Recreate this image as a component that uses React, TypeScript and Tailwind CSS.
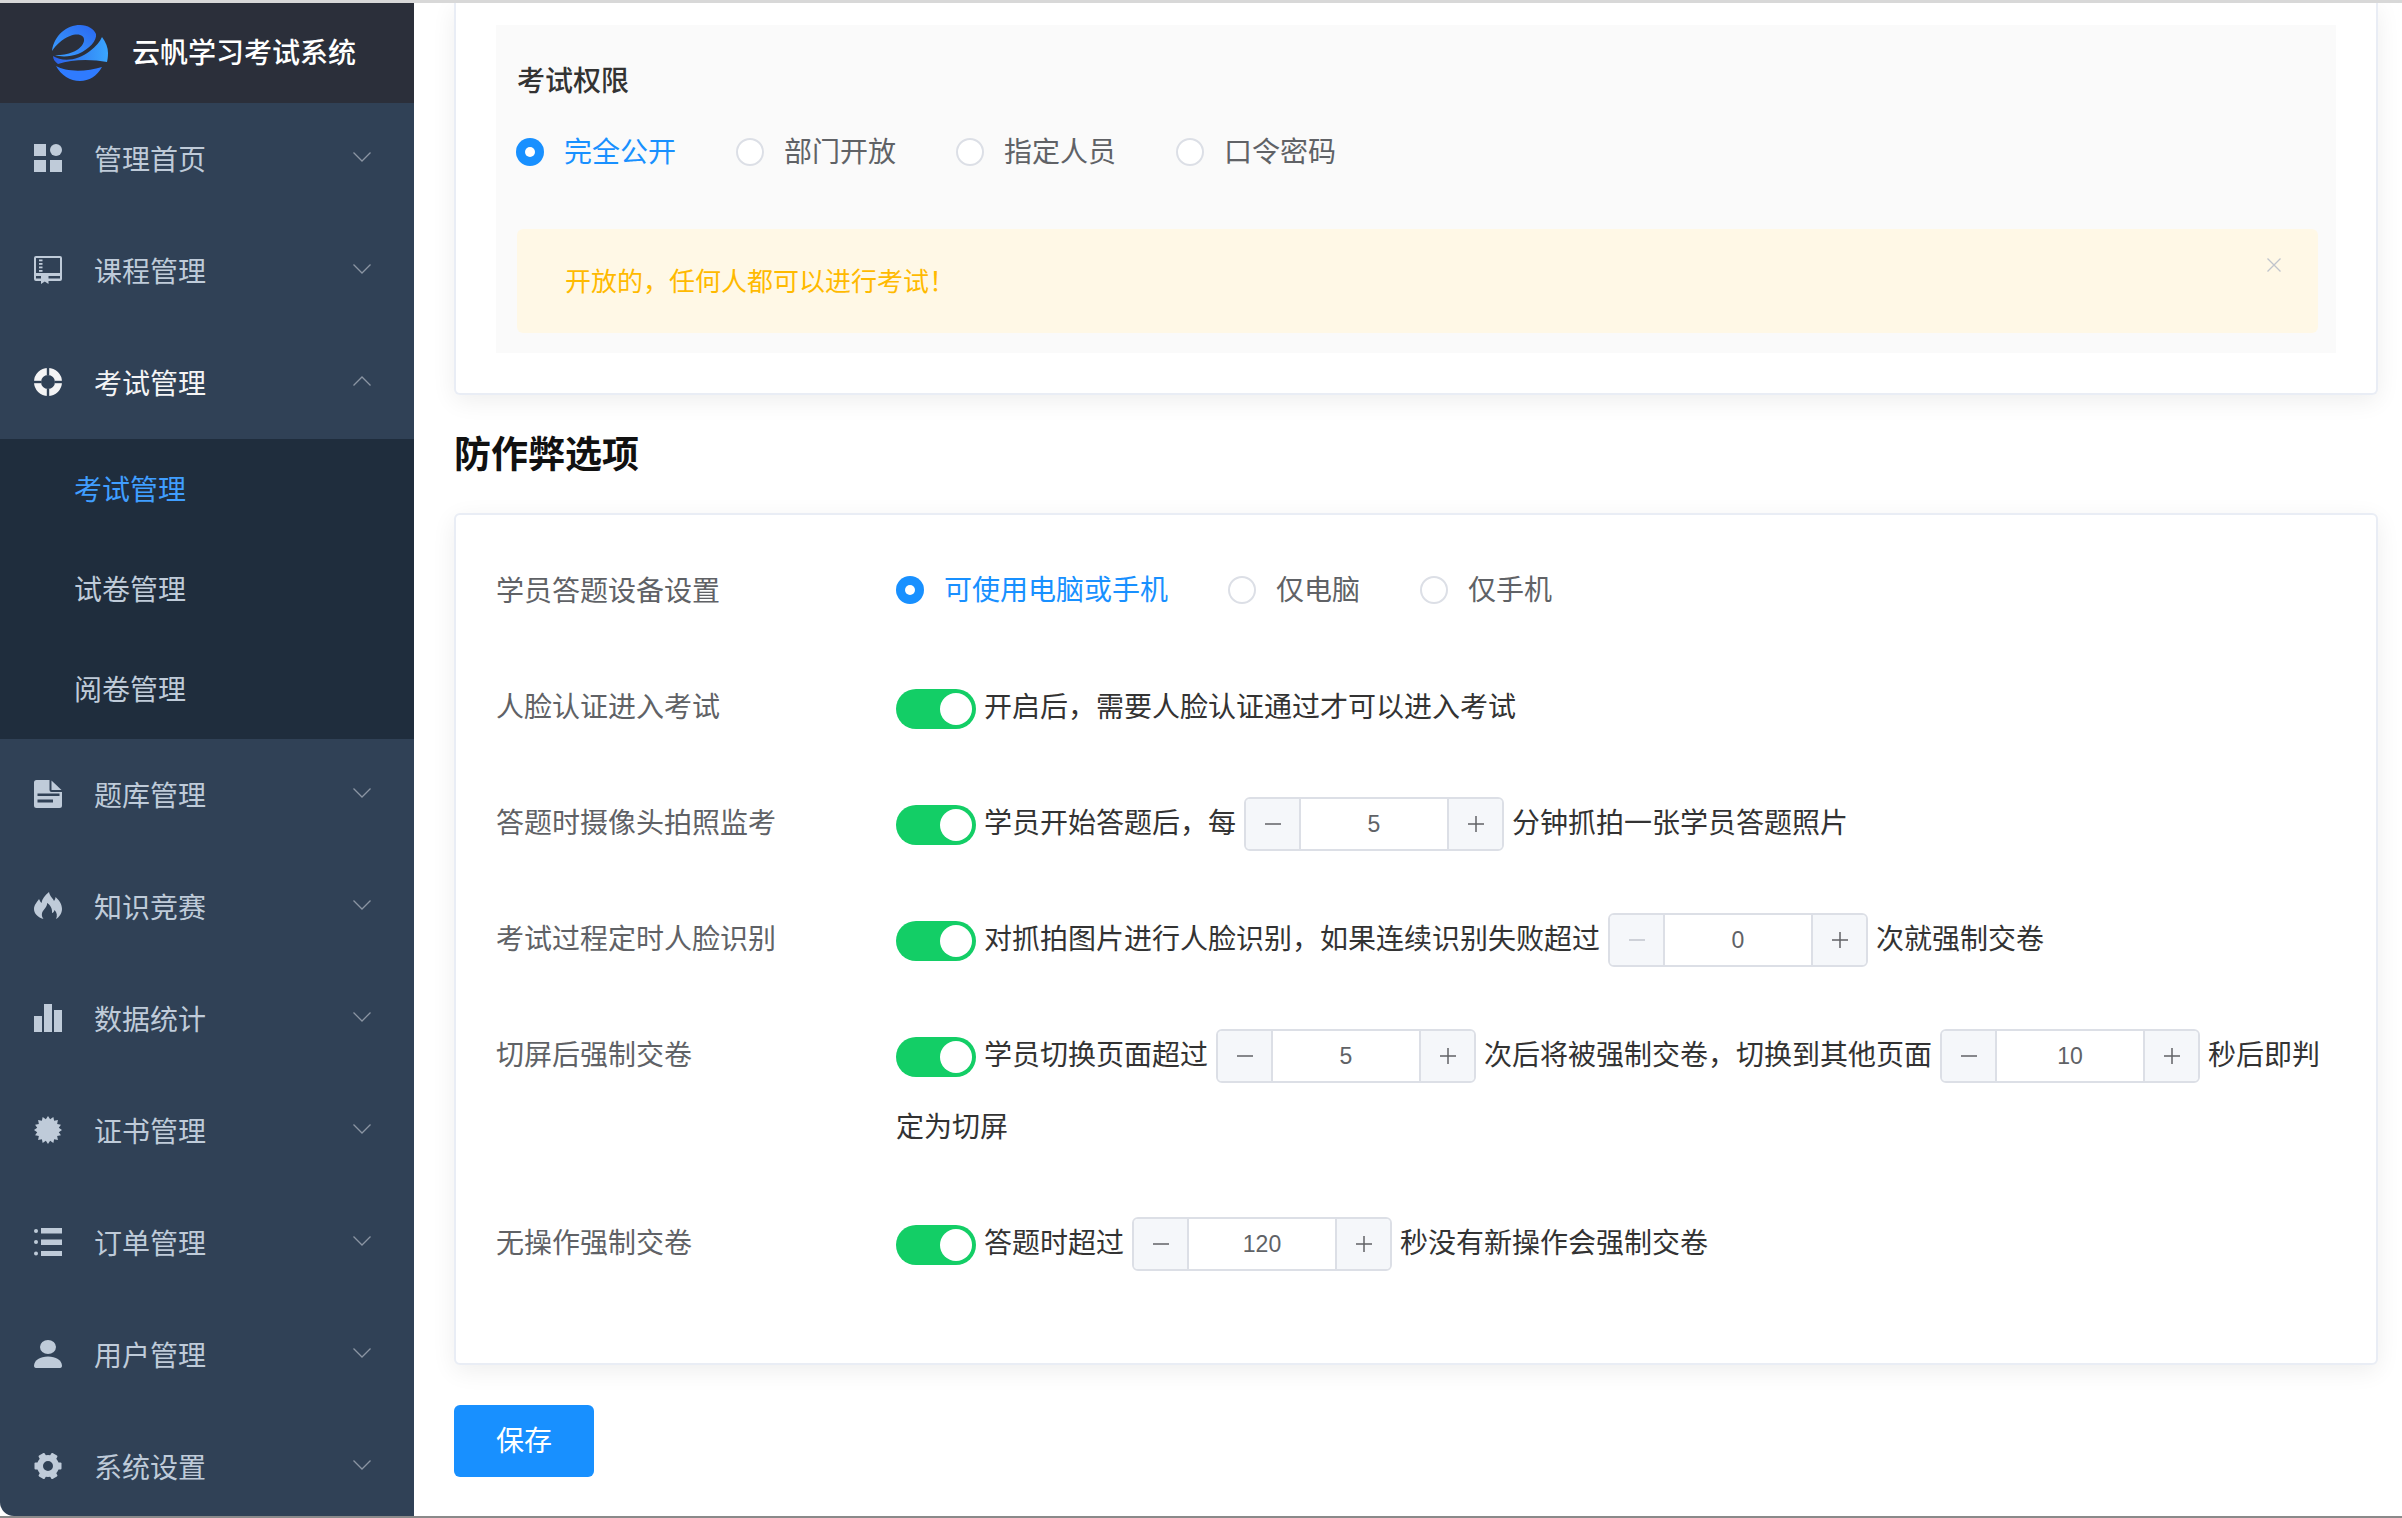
import { ReactNode } from "react";

const Grid = () => (
  <svg viewBox="0 0 28 28" className="w-7 h-7" fill="currentColor">
    <rect x="0" y="0" width="12" height="12" />
    <circle cx="22" cy="6" r="6" />
    <rect x="0" y="16" width="12" height="12" />
    <rect x="16" y="16" width="12" height="12" />
  </svg>
);

const Book = () => (
  <svg viewBox="0 0 28 28" className="w-7 h-7" fill="currentColor">
    <path
      fillRule="evenodd"
      d="M2 0h24a2 2 0 0 1 2 2v21a2 2 0 0 1-2 2H2a2 2 0 0 1-2-2V2a2 2 0 0 1 2-2zM2 2v15h24V2zM2 20v2.500h24V20z"
    />
    <rect x="5" y="3.500" width="3.500" height="1.800" />
    <rect x="5" y="7" width="3.500" height="1.800" />
    <rect x="5" y="10.500" width="3.500" height="1.800" />
    <rect x="5" y="14" width="3.500" height="1.800" />
    <path d="M7 20h7.500v8l-3.750-2.500L7 28z" />
  </svg>
);

const Ring = () => (
  <svg viewBox="0 0 28 28" className="w-7 h-7">
    <circle cx="14" cy="14" r="10.500" fill="none" stroke="currentColor" strokeWidth="7" />
    <rect x="12.800" y="0" width="2.400" height="7" fill="#304156" />
    <rect x="12.800" y="21" width="2.400" height="7" fill="#304156" />
    <rect x="0" y="12.800" width="7" height="2.400" fill="#304156" />
    <rect x="21" y="12.800" width="7" height="2.400" fill="#304156" />
  </svg>
);

const FileIcon = () => (
  <svg viewBox="0 0 28 28" className="w-7 h-7" fill="currentColor">
    <path d="M2.500 0H15.500V10a2 2 0 0 0 2 2H28v13.500a2.500 2.500 0 0 1-2.500 2.500h-23A2.500 2.500 0 0 1 0 25.500v-23A2.500 2.500 0 0 1 2.500 0z" />
    <path d="M17.500 0.500 27.500 10H17.500z" />
    <rect x="3.500" y="13.500" width="22" height="2.500" fill="#304156" />
    <rect x="3.500" y="19.500" width="15.500" height="3" fill="#304156" />
  </svg>
);

const Fire = () => (
  <svg viewBox="0 0 28 28" className="w-7 h-7" fill="currentColor">
    <path d="M15 0C16 5 19 6 20 9C21 7.500 21.500 6.500 21.500 5C25 8 28 12 28 17C28 21 25.500 25 22 27C23.500 24 23 20.500 20.500 18C20 20 19 21 18 21C18.500 17 16.500 13 13 11C13.500 14 11 16 9 19C7 22 8 25 9.500 27C3 25 0 21 0 17C0 13 3 10 5 7C6 9 6.500 10 7.500 11C8 7 11 3 15 0Z" />
  </svg>
);

const Bars = () => (
  <svg viewBox="0 0 28 28" className="w-7 h-7" fill="currentColor">
    <rect x="0" y="12" width="8" height="16" />
    <rect x="10" y="0" width="8" height="28" />
    <rect x="20" y="6" width="8" height="22" />
  </svg>
);

const badgePoints = Array.from({ length: 32 }, (_, i) => {
  const r = i % 2 ? 11 : 14;
  const a = (i * Math.PI) / 16;
  return (14 + r * Math.sin(a)).toFixed(2) + "," + (14 - r * Math.cos(a)).toFixed(2);
}).join(" ");

const Badge = () => (
  <svg viewBox="0 0 28 28" className="w-7 h-7" fill="currentColor">
    <polygon points={badgePoints} />
  </svg>
);

const ListIcon = () => (
  <svg viewBox="0 0 28 28" className="w-7 h-7" fill="currentColor">
    <circle cx="2" cy="3" r="2" />
    <circle cx="2" cy="14" r="2" />
    <circle cx="2" cy="25.500" r="2" />
    <rect x="7" y="0" width="21" height="5.500" />
    <rect x="7" y="11.500" width="21" height="5.500" />
    <rect x="7" y="23" width="21" height="5" />
  </svg>
);

const User = () => (
  <svg viewBox="0 0 28 28" className="w-7 h-7" fill="currentColor">
    <ellipse cx="14" cy="7" rx="8" ry="7" />
    <path d="M2 28C0.500 28 0 27 0 25.500C0.500 20 6 16.500 14 16.500S27.500 20 28 25.500C28 27 27.500 28 26 28Z" />
  </svg>
);

const Cog = () => (
  <svg viewBox="0 0 28 28" className="w-7 h-7" fill="currentColor">
    <circle cx="14" cy="14" r="8" fill="none" stroke="currentColor" strokeWidth="6" />
    {[30, 90, 150, 210, 270, 330].map((deg) => (
      <rect key={deg} x="10.500" y="0.500" width="7" height="6" rx="1" transform={"rotate(" + deg + " 14 14)"} />
    ))}
  </svg>
);

const Logo = () => (
  <svg viewBox="0 0 56 56" className="w-14 h-14">
    <defs>
      <linearGradient id="lg1" x1="0" y1="1" x2="1" y2="0">
        <stop offset="0" stopColor="#3aa0ff" />
        <stop offset="1" stopColor="#2a66f0" />
      </linearGradient>
      <linearGradient id="lg2" x1="0" y1="0" x2="1" y2="0">
        <stop offset="0" stopColor="#2b5fe8" />
        <stop offset="1" stopColor="#3aa6ff" />
      </linearGradient>
    </defs>
    <path
      fill="url(#lg1)"
      d="M0 26C2 10 15 0 28 0C36 0 42 4 44 9C45 15 38 24 26 29C18 32 8 32 3 30C16 31 30 25 32 16C33 10 26 8 18 11C10 14 4 20 0 26Z"
    />
    <path
      fill="url(#lg2)"
      d="M1 31C10 37 26 36 38 26C44 21 48 17 50 12C54 17 56 23 56 28C56 32 55.500 35 55 37C40 34 20 34 6 39C3 37 1 34 1 31Z"
    />
    <path fill="#2f7bff" d="M4 41C14 47 34 47 50 42C45 51 37 56 28 56C18 56 9 50 4 41Z" />
  </svg>
);

const Chevron = ({ up }: { up?: boolean }) => (
  <svg viewBox="0 0 18 10" className="w-[18px] h-[10px] -mt-[4px]" fill="none" stroke="#8b95a3" strokeWidth="1.300">
    {up ? <path d="M0.500 9.500 9 1l8.500 8.500" /> : <path d="M0.500 0.500 9 9l8.500-8.500" />}
  </svg>
);

const MenuRow = ({ icon, label, open }: { icon: ReactNode; label: string; open?: boolean }) => (
  <div className={"flex items-center h-[112px] pl-[34px] pr-[43px] " + (open ? "text-[#f4f4f5]" : "text-[#bfcbd9]")}>
    <span className="-mt-[2px]">{icon}</span>
    <span className="ml-[32px] flex-1 pt-[4px] text-[28px]">{label}</span>
    <Chevron up={open} />
  </div>
);

const SubRow = ({ label, active }: { label: string; active?: boolean }) => (
  <div className={"flex items-center h-[100px] pl-[74px] pt-[4px] text-[28px] " + (active ? "text-[#409eff]" : "text-[#bfcbd9]")}>{label}</div>
);

const Sidebar = () => (
  <aside className="w-[414px] shrink-0 bg-[#304156] rounded-bl-[14px] overflow-hidden">
    <div className="flex items-center h-[100px] bg-[#2b2f3a] pl-[52px]">
      <Logo />
      <span className="ml-[24px] pt-[2px] text-[28px] font-medium text-white">云帆学习考试系统</span>
    </div>
    <MenuRow icon={<Grid />} label="管理首页" />
    <MenuRow icon={<Book />} label="课程管理" />
    <MenuRow icon={<Ring />} label="考试管理" open />
    <div className="bg-[#1f2d3d]">
      <SubRow label="考试管理" active />
      <SubRow label="试卷管理" />
      <SubRow label="阅卷管理" />
    </div>
    <MenuRow icon={<FileIcon />} label="题库管理" />
    <MenuRow icon={<Fire />} label="知识竞赛" />
    <MenuRow icon={<Bars />} label="数据统计" />
    <MenuRow icon={<Badge />} label="证书管理" />
    <MenuRow icon={<ListIcon />} label="订单管理" />
    <MenuRow icon={<User />} label="用户管理" />
    <MenuRow icon={<Cog />} label="系统设置" />
  </aside>
);

const Radio = ({ label, checked }: { label: string; checked?: boolean }) => (
  <label className="flex items-center gap-5">
    {checked ? (
      <span className="flex items-center justify-center w-7 h-7 rounded-full bg-[#1890ff]">
        <span className="w-[10px] h-[10px] rounded-full bg-white" />
      </span>
    ) : (
      <span className="w-7 h-7 rounded-full border-2 border-[#dcdfe6] bg-white" />
    )}
    <span className={"pt-[2px] " + (checked ? "text-[#1890ff]" : "text-[#606266]")}>{label}</span>
  </label>
);

const Toggle = () => (
  <span className="inline-flex items-center justify-end align-middle w-20 h-10 mr-2 mb-[2px] pr-1 rounded-full bg-[#13ce66]">
    <span className="w-8 h-8 rounded-full bg-white" />
  </span>
);

const Stepper = ({ value, disabled }: { value: number; disabled?: boolean }) => (
  <span className="inline-flex align-middle w-[260px] h-[54px] mx-2 mb-[4px] border-2 border-[#dcdfe6] rounded-[6px] overflow-hidden font-['Liberation_Sans',sans-serif] text-[#606266]">
    <span className={"flex items-center justify-center w-[55px] bg-[#f5f7fa] border-r-2 border-[#dcdfe6] " + (disabled ? "text-[#c0c4cc]" : "")}>
      <svg viewBox="0 0 16 16" className="w-4 h-4" fill="none" stroke="currentColor" strokeWidth="1.500">
        <path d="M0 8h16" />
      </svg>
    </span>
    <span className="flex flex-1 items-center justify-center bg-white text-[23px]">{value}</span>
    <span className="flex items-center justify-center w-[55px] bg-[#f5f7fa] border-l-2 border-[#dcdfe6]">
      <svg viewBox="0 0 16 16" className="w-4 h-4" fill="none" stroke="currentColor" strokeWidth="1.500">
        <path d="M0 8h16M8 0v16" />
      </svg>
    </span>
  </span>
);

const FormRow = ({ label, children, last }: { label: string; children: ReactNode; last?: boolean }) => (
  <div className={"flex " + (last ? "" : "mb-[42px]")}>
    <div className="w-[400px] shrink-0 pt-[2px] leading-[72px] text-[#606266]">{label}</div>
    <div className="flex-1 pt-[2px] leading-[72px] text-[#333]">{children}</div>
  </div>
);

export default function App() {
  return (
    <div className="flex flex-col w-[2402px] h-[1518px] overflow-hidden bg-white text-[28px] font-['Liberation_Sans','Noto_Sans_CJK_SC',sans-serif]">
      <div className="h-[3px] shrink-0 bg-[#d8d8d8]" />
      <div className="flex flex-1 min-h-0">
        <Sidebar />
        <main className="flex-1 min-w-0 pl-[40px] pr-[24px] overflow-hidden">
          <section className="h-[392px] pt-[22px] px-[40px] bg-white border-x-2 border-b-2 border-[#e9edf5] rounded-b-[6px] shadow-[0_6px_24px_rgba(0,0,0,0.07)]">
            <div className="h-[328px] pl-[21px] pr-[18px] pt-[37px] bg-[#fafafa]">
              <h3 className="leading-10 font-medium text-[#333]">考试权限</h3>
              <div className="flex gap-[60px] h-10 mt-[30px] -ml-[1px]">
                <Radio label="完全公开" checked />
                <Radio label="部门开放" />
                <Radio label="指定人员" />
                <Radio label="口令密码" />
              </div>
              <div className="relative flex items-center h-[104px] mt-[57px] pl-[48px] pt-[2px] rounded-[6px] bg-[#fff8e6] text-[26px] text-[#ffba00]">
                <span>开放的，任何人都可以进行考试！</span>
                <svg viewBox="0 0 14 14" className="absolute top-[29px] right-[37px] w-[14px] h-[14px]" fill="none" stroke="#c0c4cc" strokeWidth="1.300">
                  <path d="M0.500 0.500l13 13M13.500 0.500l-13 13" />
                </svg>
              </div>
            </div>
          </section>

          <h2 className="mt-[36px] text-[37px] leading-[50px] font-bold text-[#111]">防作弊选项</h2>

          <section className="h-[852px] mt-[32px] pt-[39px] px-[40px] bg-white border-2 border-[#e9edf5] rounded-[6px] shadow-[0_6px_24px_rgba(0,0,0,0.07)]">
            <FormRow label="学员答题设备设置">
              <div className="flex items-center gap-[60px] h-[72px] -mt-[2px]">
                <Radio label="可使用电脑或手机" checked />
                <Radio label="仅电脑" />
                <Radio label="仅手机" />
              </div>
            </FormRow>
            <FormRow label="人脸认证进入考试">
              <Toggle />
              <span>开启后，需要人脸认证通过才可以进入考试</span>
            </FormRow>
            <FormRow label="答题时摄像头拍照监考">
              <Toggle />
              <span>学员开始答题后，每</span>
              <Stepper value={5} />
              <span>分钟抓拍一张学员答题照片</span>
            </FormRow>
            <FormRow label="考试过程定时人脸识别">
              <Toggle />
              <span>对抓拍图片进行人脸识别，如果连续识别失败超过</span>
              <Stepper value={0} disabled />
              <span>次就强制交卷</span>
            </FormRow>
            <FormRow label="切屏后强制交卷">
              <Toggle />
              <span>学员切换页面超过</span>
              <Stepper value={5} />
              <span>次后将被强制交卷，切换到其他页面</span>
              <Stepper value={10} />
              <span>秒后即判</span>
              <span>定为切屏</span>
            </FormRow>
            <FormRow label="无操作强制交卷" last>
              <Toggle />
              <span>答题时超过</span>
              <Stepper value={120} />
              <span>秒没有新操作会强制交卷</span>
            </FormRow>
          </section>

          <button className="block w-[140px] h-[72px] mt-[40px] pt-[2px] rounded-[6px] bg-[#1890ff] text-white">保存</button>
        </main>
      </div>
      <div className="h-[2px] shrink-0 bg-[#8a8a8a]" />
    </div>
  );
}
